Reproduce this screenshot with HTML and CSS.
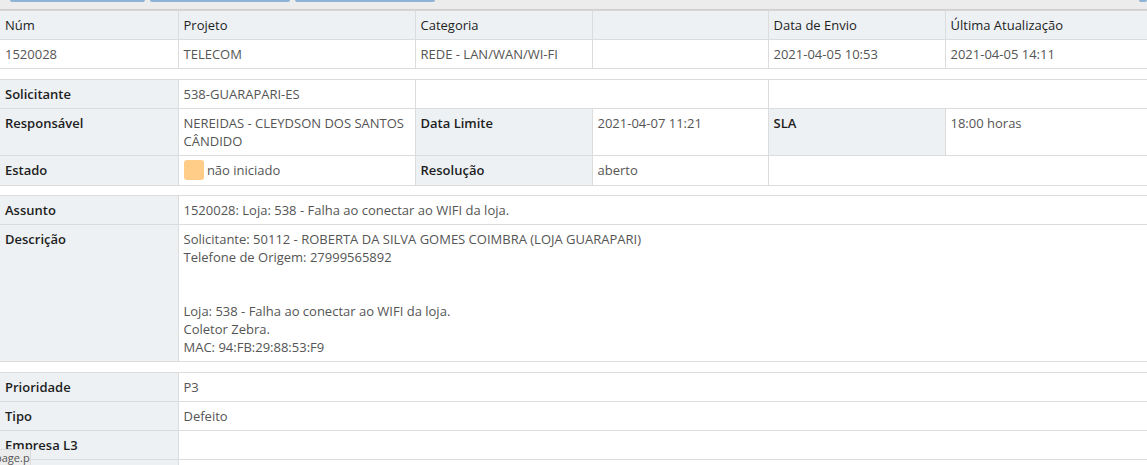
FILE: index.html
```html
<!DOCTYPE html>
<html lang="pt-BR">
<head>
<meta charset="utf-8">
<title>Chamado 1520028</title>
<link rel="stylesheet" href="styles.css">
</head>
<body>
<div class="toolbar">
  <span class="btn b1"></span>
  <span class="btn b2"></span>
  <span class="btn b3"></span>
  <span class="spacer"></span>
  <span class="btn b4"></span>
</div>

<table class="grid first">
  <colgroup><col class="c1"><col class="c2"><col class="c3"><col class="c4"><col class="c5"><col class="c6"></colgroup>
  <tr class="head">
    <th>Núm</th><th>Projeto</th><th>Categoria</th><th></th><th>Data de Envio</th><th>Última Atualização</th>
  </tr>
  <tr>
    <td>1520028</td><td>TELECOM</td><td>REDE - LAN/WAN/WI-FI</td><td></td><td>2021-04-05 10:53</td><td>2021-04-05 14:11</td>
  </tr>
</table>

<table class="grid">
  <colgroup><col class="c1"><col class="c2"><col class="c3"><col class="c4"><col class="c5"><col class="c6"></colgroup>
  <tr>
    <th>Solicitante</th><td>538-GUARAPARI-ES</td><td colspan="2"></td><td colspan="2"></td>
  </tr>
  <tr>
    <th>Responsável</th><td>NEREIDAS - CLEYDSON DOS SANTOS CÂNDIDO</td><th>Data Limite</th><td>2021-04-07 11:21</td><th>SLA</th><td>18:00 horas</td>
  </tr>
  <tr>
    <th>Estado</th><td><span class="swatch"></span> não iniciado</td><th>Resolução</th><td>aberto</td><td colspan="2"></td>
  </tr>
</table>

<table class="grid gap9">
  <colgroup><col class="c1"><col class="c2"><col class="c3"><col class="c4"><col class="c5"><col class="c6"></colgroup>
  <tr>
    <th>Assunto</th><td colspan="5">1520028: Loja: 538 - Falha ao conectar ao WIFI da loja.</td>
  </tr>
  <tr>
    <th>Descrição</th><td colspan="5" class="desc">Solicitante: 50112 - ROBERTA DA SILVA GOMES COIMBRA (LOJA GUARAPARI)<br>Telefone de Origem: 27999565892<br><br><br>Loja: 538 - Falha ao conectar ao WIFI da loja.<br>Coletor Zebra.<br>MAC: 94:FB:29:88:53:F9</td>
  </tr>
</table>

<table class="grid">
  <colgroup><col class="c1"><col class="c2"><col class="c3"><col class="c4"><col class="c5"><col class="c6"></colgroup>
  <tr><th>Prioridade</th><td colspan="5">P3</td></tr>
  <tr><th>Tipo</th><td colspan="5">Defeito</td></tr>
  <tr><th>Empresa L3</th><td colspan="5"></td></tr>
  <tr><th>&nbsp;</th><td colspan="5"></td></tr>
</table>

<div class="status">page.p</div>
</body>
</html>
```

FILE: styles.css
```css
html, body {
  margin: 0;
  padding: 0;
  background: #fff;
  overflow: hidden;
}
body {
  font-family: "Open Sans", "Noto Sans", sans-serif;
  font-size: 13px;
  color: #555;
  width: 1147px;
  height: 465px;
  position: relative;
}
.toolbar {
  height: 9px;
  background: #ececec;
  border-bottom: 1px solid #cfcfcf;
  display: flex;
  align-items: flex-start;
  padding-left: 10px;
  gap: 5px;
}
.btn {
  display: block;
  height: 2px;
  background: #8fb3d6;
  border-radius: 0 0 2px 2px;
}
.b1 { width: 135px; }
.b2 { width: 140px; }
.b3 { width: 140px; }
.spacer { flex: 1; }
.b4 { width: 8px; }

.grid {
  width: 1147px;
  border-collapse: collapse;
  table-layout: fixed;
  margin-top: 10px;
}
.grid.first { margin-top: 0; }
.grid.gap9 { margin-top: 9px; }
.c1 { width: 178px; }
.c2 { width: 237px; }
.c3 { width: 177px; }
.c4 { width: 176px; }
.c5 { width: 177px; }
.c6 { width: 202px; }

.grid th, .grid td {
  border: 1px solid #dcdcdc;
  padding: 5px 6px 5px 5px;
  line-height: 18px;
  text-align: left;
  vertical-align: top;
  font-size: 13px;
}
.grid th {
  background: #edf1f4;
  color: #1e1e1e;
  font-weight: 600;
}
.grid tr.head th {
  font-weight: 400;
  color: #1e1e1e;
  border-top-color: #d6d6d6;
}
.grid th:first-child, .grid td:first-child { border-left: 0; }
.grid th:last-child, .grid td:last-child { border-right: 0; }
.grid td { color: #555; }

.swatch {
  display: inline-block;
  width: 20px;
  height: 20px;
  background: #ffcd88;
  border-radius: 3px;
  vertical-align: -5px;
  margin-top: -2px;
}

.status {
  position: absolute;
  left: -5px;
  bottom: 0;
  height: 15px;
  width: 35px;
  background: #ececec;
  border-top: 1px solid #dcdcdc;
  border-right: 1px solid #dcdcdc;
  font-size: 11px;
  line-height: 15px;
  color: #555;
  overflow: hidden;
  white-space: nowrap;
}
```
